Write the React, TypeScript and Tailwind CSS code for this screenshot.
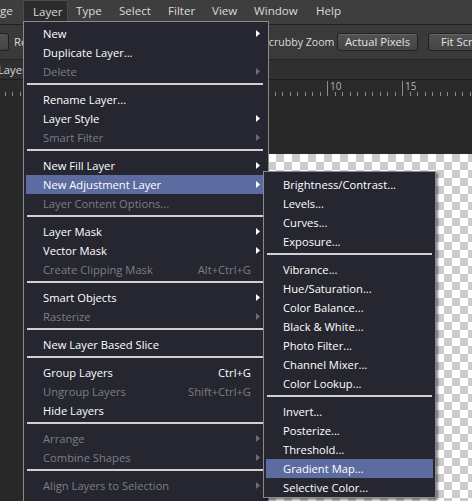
import React from "react";

type ItemProps = {
  label: string;
  disabled?: boolean;
  arrow?: boolean;
  shortcut?: string;
  active?: boolean;
};

function Arrow({ disabled }: { disabled?: boolean }) {
  return (
    <svg width="4" height="7" viewBox="0 0 4 7">
      <path d="M0 0L4 3.5L0 7Z" fill={disabled ? "#6c6d75" : "#ffffff"} />
    </svg>
  );
}

function Item({ label, disabled, arrow, shortcut, active }: ItemProps) {
  return (
    <div
      className={
        "h-[19px] mx-[2px] pl-[17px] pr-[6px] flex items-center " +
        (active ? "bg-[#5c6ba0]" : "")
      }
    >
      <span
        className={
          "flex-1 whitespace-nowrap " +
          (disabled ? "text-[#7d7e86]" : "text-white")
        }
      >
        {label}
      </span>
      {shortcut ? (
        <span
          className={
            "whitespace-nowrap " + (disabled ? "text-[#7d7e86]" : "text-white")
          }
        >
          {shortcut}
        </span>
      ) : null}
      <span className="w-[4px] ml-[5px] flex items-center">
        {arrow ? <Arrow disabled={disabled} /> : null}
      </span>
    </div>
  );
}

function Sep({ sub }: { sub?: boolean }) {
  return (
    <div className={"h-[9px] pt-[2px] pl-[3px] " + (sub ? "pr-[3px]" : "pr-[5px]")}>
      <div className="h-[2px] bg-[#d0d0d0]" />
    </div>
  );
}

function Ruler() {
  const ticks: number[] = [];
  for (let k = -44; k <= 20; k++) {
    const x = 327 + k * 7.5;
    if (x >= 0 && x <= 472) ticks.push(x);
  }
  const majors = [177, 252, 327, 402];
  const labels: Record<number, string> = { 177: "0", 252: "5", 327: "10", 402: "15" };
  return (
    <svg width="472" height="16" viewBox="0 0 472 16" className="block">
      {ticks.map((x) => (
        <line
          key={x}
          x1={Math.round(x) + 0.5}
          x2={Math.round(x) + 0.5}
          y1={majors.includes(x) ? 1 : 12}
          y2={16}
          stroke="#8c8c8c"
          strokeWidth="1"
        />
      ))}
      {majors.map((x) => (
        <text
          key={"t" + x}
          x={x + 3}
          y={10}
          fill="#b4b4b4"
          fontSize="10"
          fontFamily="'Open Sans', sans-serif"
        >
          {labels[x]}
        </text>
      ))}
    </svg>
  );
}

function Button({ children, className }: { children: React.ReactNode; className?: string }) {
  return (
    <div
      className={
        "h-[18px] rounded-[3px] border border-[#222222] bg-gradient-to-b from-[#525252] to-[#444444] shadow-[inset_0_1px_0_rgba(255,255,255,0.12)] flex items-center justify-center text-[#e2e2e2] " +
        (className || "")
      }
    >
      {children}
    </div>
  );
}

export default function App() {
  return (
    <div
      className="relative w-[472px] h-[501px] overflow-hidden bg-[#282828] text-[11.2px] leading-none"
      style={{ fontFamily: "'Open Sans', 'Noto Sans', sans-serif" }}
    >
      {/* Menu bar */}
      <div className="h-[24px] bg-[#3e3e3e] flex items-start text-[#dadada] text-[11.6px]">
        <div className="w-[23px] h-[22px] flex items-center">ge</div>
        <div className="w-[45px] h-[22px] pl-[9px] flex items-center bg-[#2c2c2c] rounded-t-[2px] border-x border-t border-[#4a4a4a]">
          Layer
        </div>
        <div className="w-[43px] h-[22px] pl-[8px] flex items-center">Type</div>
        <div className="w-[49px] h-[22px] pl-[8px] flex items-center">Select</div>
        <div className="w-[44px] h-[22px] pl-[8px] flex items-center">Filter</div>
        <div className="w-[42px] h-[22px] pl-[8px] flex items-center">View</div>
        <div className="w-[61px] h-[22px] pl-[8px] flex items-center">Window</div>
        <div className="h-[22px] pl-[9px] flex items-center">Help</div>
      </div>
      <div className="h-[1px] bg-[#1f1f1f]" />
      {/* Options bar */}
      <div className="h-[34px] bg-[#3a3a3a] flex items-center text-[#dcdcdc] text-[11.2px] overflow-hidden">
        <div className="w-[263px] shrink-0 flex items-center overflow-hidden whitespace-nowrap">
          <div className="w-[9px] h-[18px] rounded-r-[3px] border border-l-0 border-[#222222] bg-gradient-to-b from-[#525252] to-[#444444]" />
          <span className="ml-[5px]">Resize Windows to Fit</span>
        </div>
        <div className="w-[74px] shrink-0 whitespace-nowrap text-[10.6px]">Scrubby Zoom</div>
        <Button className="w-[81px] shrink-0">Actual Pixels</Button>
        <Button className="w-[80px] shrink-0 ml-[10px] justify-start pl-[12px] whitespace-nowrap">
          Fit Screen
        </Button>
      </div>
      <div className="h-[1px] bg-[#222222]" />
      {/* Tab bar */}
      <div className="h-[19px] bg-[#303030] flex items-center text-[#d8d8d8] overflow-hidden">
        <span className="ml-[-2px] whitespace-nowrap">Layer 1, RGB/8</span>
      </div>
      <div className="h-[1px] bg-[#1e1e1e]" />
      {/* Ruler */}
      <div className="h-[16px] bg-[#2a2a2a]">
        <Ruler />
      </div>
      {/* Canvas */}
      <div className="h-[406px] bg-[#282828] pt-[58px] pl-[200px]">
        <div className="h-full bg-[repeating-conic-gradient(#cccccc_0%_25%,#ffffff_0%_50%)] bg-[length:16px_16px] bg-[position:4px_0px]" />
      </div>

      {/* Layer menu */}
      <div className="absolute left-[23px] top-[21px] w-[246px] h-[500px] border border-[#8a8a8a] bg-[#25262f] pt-[2px]">
        <Item label="New" arrow />
        <Item label="Duplicate Layer..." />
        <Item label="Delete" disabled arrow />
        <Sep />
        <Item label="Rename Layer..." />
        <Item label="Layer Style" arrow />
        <Item label="Smart Filter" disabled arrow />
        <Sep />
        <Item label="New Fill Layer" arrow />
        <Item label="New Adjustment Layer" arrow active />
        <Item label="Layer Content Options..." disabled />
        <Sep />
        <Item label="Layer Mask" arrow />
        <Item label="Vector Mask" arrow />
        <Item label="Create Clipping Mask" disabled shortcut="Alt+Ctrl+G" />
        <Sep />
        <Item label="Smart Objects" arrow />
        <Item label="Rasterize" disabled arrow />
        <Sep />
        <Item label="New Layer Based Slice" />
        <Sep />
        <Item label="Group Layers" shortcut="Ctrl+G" />
        <Item label="Ungroup Layers" disabled shortcut="Shift+Ctrl+G" />
        <Item label="Hide Layers" />
        <Sep />
        <Item label="Arrange" disabled arrow />
        <Item label="Combine Shapes" disabled arrow />
        <Sep />
        <Item label="Align Layers to Selection" disabled arrow />
        <Item label="Distribute" disabled arrow />
      </div>

      {/* Adjustment submenu */}
      <div className="absolute left-[263px] top-[171px] w-[173px] border border-[#8a8a8a] bg-[#25262f] pt-[3px] shadow-[2px_2px_2px_rgba(0,0,0,0.45)]">
        <Item label="Brightness/Contrast..." />
        <Item label="Levels..." />
        <Item label="Curves..." />
        <Item label="Exposure..." />
        <Sep sub />
        <Item label="Vibrance..." />
        <Item label="Hue/Saturation..." />
        <Item label="Color Balance..." />
        <Item label="Black & White..." />
        <Item label="Photo Filter..." />
        <Item label="Channel Mixer..." />
        <Item label="Color Lookup..." />
        <Sep sub />
        <Item label="Invert..." />
        <Item label="Posterize..." />
        <Item label="Threshold..." />
        <Item label="Gradient Map..." active />
        <Item label="Selective Color..." />
      </div>
    </div>
  );
}
